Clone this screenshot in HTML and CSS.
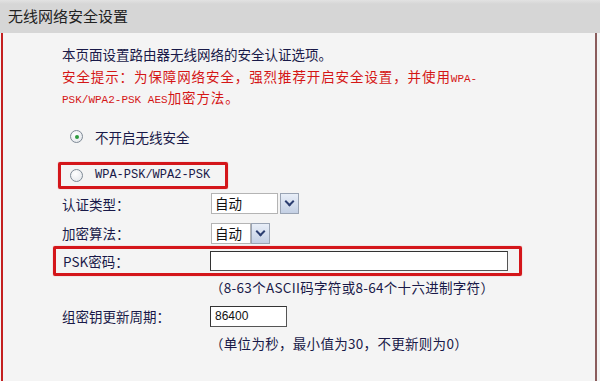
FILE: index.html
```html
<!DOCTYPE html>
<html lang="zh-CN">
  <head>
    <meta charset="UTF-8" />
    <title>无线网络安全设置</title>
    <link rel="stylesheet" href="styles.css">
  </head>
  <body>
    <div class="panel">
      <div class="title">无线网络安全设置</div>
      <div class="content">
        <div class="intro">
          <p>本页面设置路由器无线网络的安全认证选项。</p>
          <p class="warn">安全提示：为保障网络安全，强烈推荐开启安全设置，并使用<span class="mono">WPA-</span></p>
          <p class="warn"><span class="mono">PSK/WPA2-PSK AES</span>加密方法。</p>
        </div>

        <div class="radio-row first">
          <span class="radio checked"></span>
          <span>不开启无线安全</span>
        </div>

        <div class="mark mark-radio">
          <span class="radio"></span>
          <span class="mono big">WPA-PSK/WPA2-PSK</span>
        </div>

        <div class="form-row auth">
          <span class="label">认证类型：</span>
          <span class="select wide"><span class="sel-text">自动</span><span class="sel-btn"></span></span>
        </div>

        <div class="form-row algo">
          <span class="label">加密算法：</span>
          <span class="select"><span class="sel-text">自动</span><span class="sel-btn"></span></span>
        </div>

        <div class="mark mark-psk">
          <span class="label">PSK密码：</span>
          <span class="input psk"></span>
        </div>

        <div class="hint hint-psk">（8-63个ASCII码字符或8-64个十六进制字符）</div>

        <div class="form-row gkey">
          <span class="label">组密钥更新周期：</span>
          <span class="input short">86400</span>
        </div>

        <div class="hint hint-gkey">（单位为秒，最小值为30，不更新则为0）</div>
      </div>
    </div>
  </body>
</html>
```

FILE: styles.css
```css
body {
  margin: 0;
  font-family: "Noto Sans CJK SC", "Noto Sans", sans-serif;
  background-color: #f4f4f4;
  color: #191948;
  font-size: 13.5px;
}

.panel {
  width: 600px;
  height: 381px;
  overflow: hidden;
  background-color: #f4f4f4;
}

.title {
  height: 33px;
  line-height: 31px;
  padding-left: 8px;
  font-size: 15px;
  color: #222;
  background: linear-gradient(#e2e2e2, #d6d6d6 4px);
  box-sizing: border-box;
}

.content {
  margin-left: 1px;
  width: 596px;
  height: 348px;
  box-sizing: border-box;
  border-left: 2px solid #c42020;
  border-right: 2px solid #8a5c5c;
  padding-left: 59px;
}

p {
  margin: 0;
}

.intro {
  padding-top: 11px;
}

.intro p {
  height: 21.5px;
  line-height: 21.5px;
}

.warn {
  color: #d41616;
  letter-spacing: 0.9px;
}

.mono {
  font-family: "Liberation Mono", "DejaVu Sans Mono", monospace;
  font-size: 11px;
  letter-spacing: 0;
  line-height: 1;
}

.mono.big {
  font-size: 12px;
}

/* 單選鈕 */
.radio {
  display: inline-block;
  width: 11px;
  height: 11px;
  border: 1px solid #7f8a96;
  border-radius: 50%;
  background: radial-gradient(circle at 40% 35%, #ffffff, #dfe3e8);
  position: relative;
  margin-right: 12px;
}

.radio.checked::after {
  content: "";
  position: absolute;
  left: 3.5px;
  top: 3.5px;
  width: 4px;
  height: 4px;
  border-radius: 50%;
  background-color: #2e9a3e;
}

.radio-row {
  display: flex;
  align-items: center;
  height: 22px;
}

.radio-row.first {
  margin-top: 17px;
  padding-left: 8px;
}

/* 紅色標示框 */
.mark {
  display: flex;
  align-items: center;
  box-sizing: border-box;
  border: 3px solid #d4161a;
  border-radius: 2px;
  box-shadow: 0 0 1px #e06060;
}

.mark-radio {
  margin-top: 14px;
  margin-left: -4px;
  width: 170px;
  height: 27px;
  padding-left: 9px;
}

.form-row {
  display: flex;
  align-items: center;
}

.label {
  width: 148px;
  flex-shrink: 0;
}

.auth {
  margin-top: 4px;
  height: 22px;
}

.algo {
  margin-top: 8px;
  height: 21px;
}

/* 下拉選單 */
.select {
  display: flex;
  height: 21px;
  margin-left: 1px;
}

.sel-text {
  box-sizing: border-box;
  width: 40px;
  height: 21px;
  line-height: 19px;
  padding-left: 3px;
  background-color: #fff;
  border: 1px solid #b4b4b4;
  color: #111;
}

.select.wide .sel-text {
  width: 67px;
  margin-right: 2px;
}

.sel-btn {
  box-sizing: border-box;
  width: 19px;
  height: 21px;
  border: 1px solid #9aa4b4;
  background: linear-gradient(#e8eef8, #c4d0e4);
  position: relative;
}

.sel-btn::after {
  content: "";
  position: absolute;
  left: 5px;
  top: 4px;
  width: 5px;
  height: 5px;
  border-right: 2px solid #2c3e70;
  border-bottom: 2px solid #2c3e70;
  transform: rotate(45deg);
}

.mark-psk {
  margin-top: 2px;
  margin-left: -9px;
  width: 469px;
  height: 30px;
  padding-left: 7px;
}

.mark-psk .label {
  width: 147px;
}

.input {
  box-sizing: border-box;
  display: inline-block;
  height: 20px;
  background-color: #fff;
  border: 1px solid #555;
  border-top-color: #333;
  border-left-color: #333;
  color: #111;
  font-family: "Liberation Sans", sans-serif;
  font-size: 12px;
  line-height: 18px;
  padding-left: 4px;
}

.psk {
  width: 298px;
}

.short {
  width: 77px;
  height: 21px;
}

.hint {
  padding-left: 148px;
  height: 17px;
  line-height: 17px;
  letter-spacing: 0.3px;
}

.hint-psk {
  margin-top: 3px;
}

.gkey {
  margin-top: 10px;
  height: 21px;
}

.hint-gkey {
  margin-top: 8px;
}
```
